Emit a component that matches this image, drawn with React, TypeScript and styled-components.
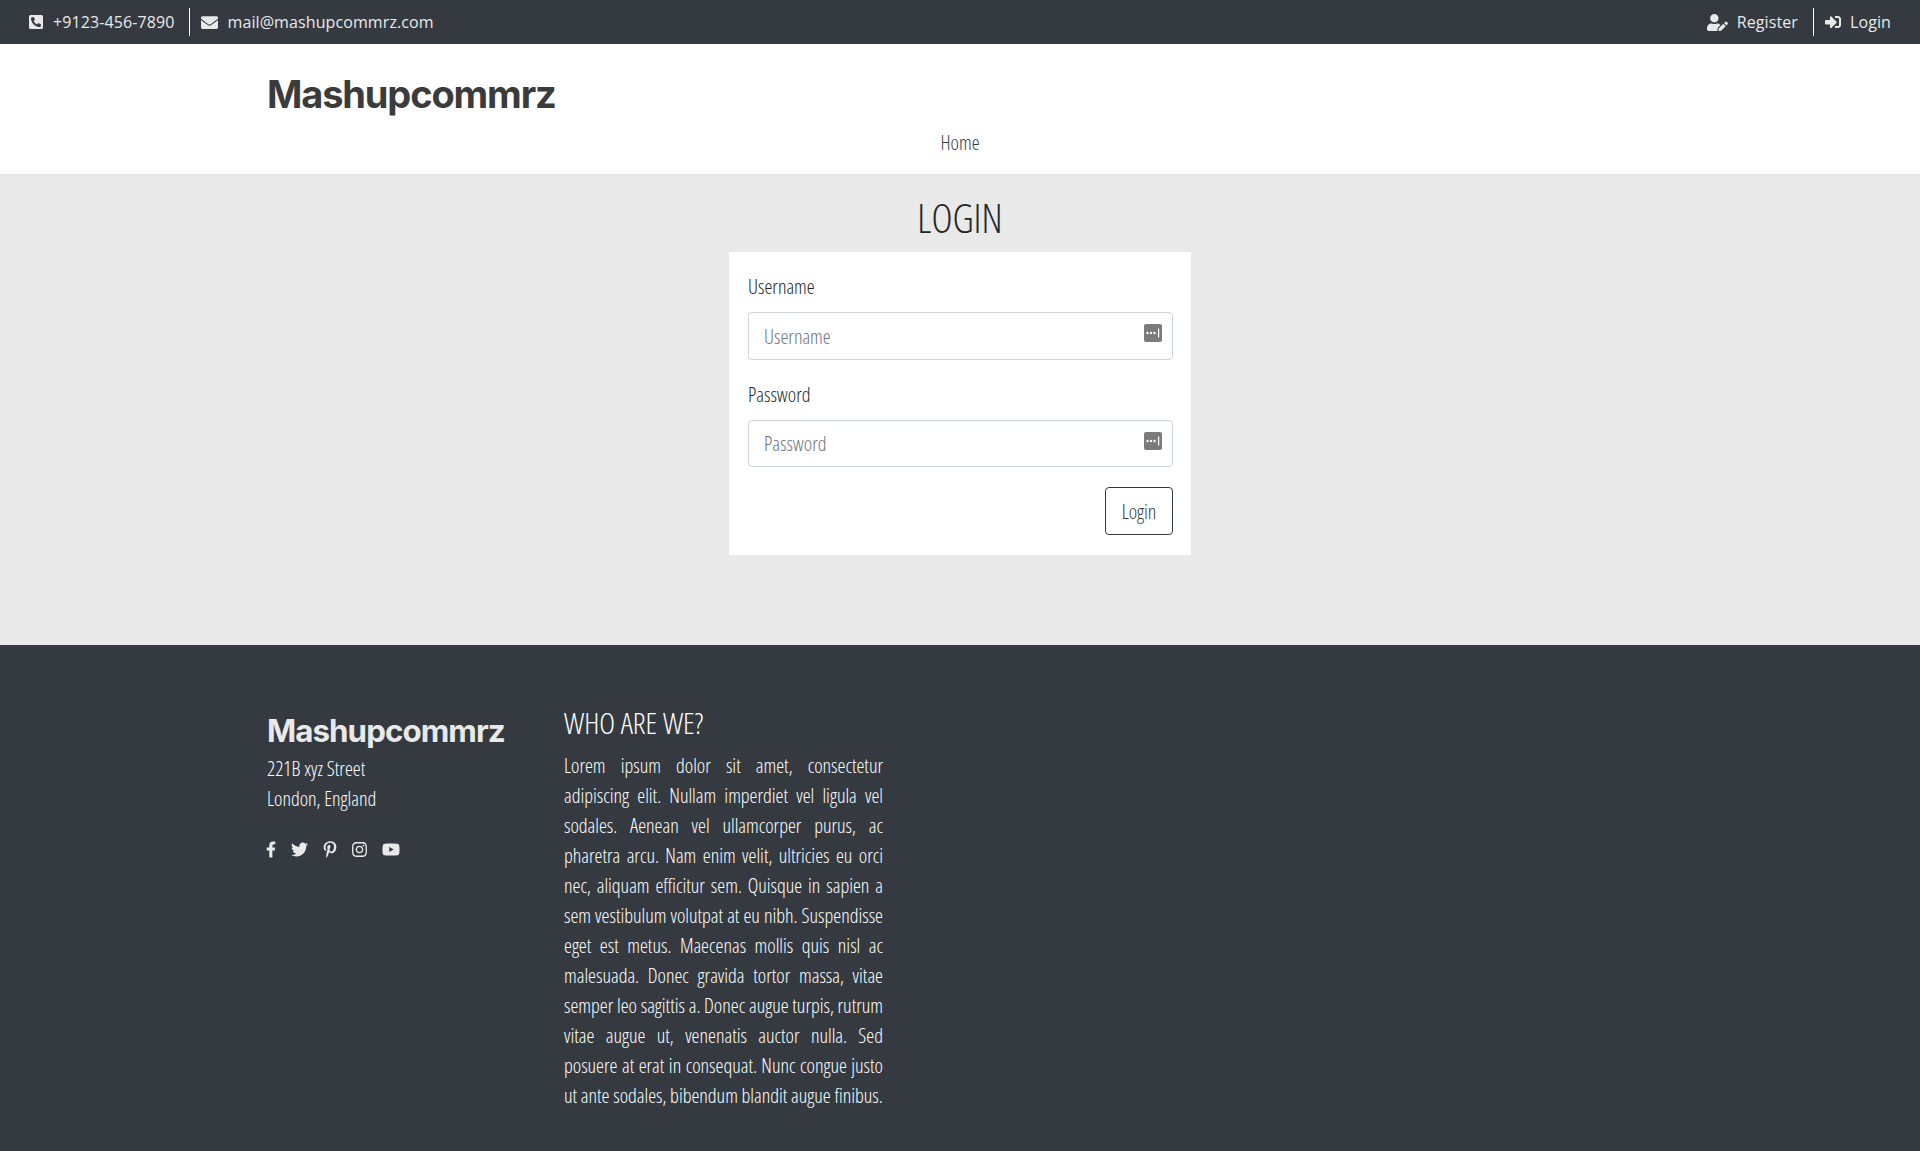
import React from 'react'
import styled, { createGlobalStyle } from 'styled-components'
import {
    FaEnvelope,
    FaFacebookF,
    FaInstagram,
    FaPhoneSquareAlt,
    FaPinterestP,
    FaSignInAlt,
    FaTwitter,
    FaUserEdit,
    FaYoutube,
} from 'react-icons/fa'

const condensed = `'Open Sans', 'Liberation Sans', sans-serif`

const GlobalStyle = createGlobalStyle`
    * {
        box-sizing: border-box;
    }
    html, body {
        margin: 0;
        padding: 0;
        background: #e9e9e9;
    }
    body {
        font-family: ${condensed};
        font-stretch: 75%;
        font-weight: 300;
    }
`

const TopBar = styled.div`
    height: 44px;
    background: #343a40;
    color: #e9e9e9;
    display: flex;
    justify-content: space-between;
    align-items: center;
    padding: 0 29px 0 28px;
    font-size: 16px;
    letter-spacing: 0.1px;
    font-stretch: 100%;
    font-weight: 400;
`

const TopGroup = styled.div`
    display: flex;
    align-items: center;
`

const TopItem = styled.span<{ $divided?: boolean }>`
    display: flex;
    align-items: center;
    height: 28px;
    gap: 9px;
    ${(p) =>
        p.$divided &&
        `border-left: 1px solid #fff;
         margin-left: 15px;
         padding-left: 11px;`}
`

const Header = styled.header`
    background: #fff;
    height: 130px;
    padding: 28px 267px 0;
    display: flex;
    flex-direction: column;
`

const Logo = styled.div<{ $size: number; $color: string }>`
    font-family: 'Inter', sans-serif;
    font-stretch: 100%;
    font-weight: 700;
    font-size: ${(p) => p.$size}px;
    letter-spacing: -0.03em;
    line-height: 1.2;
    color: ${(p) => p.$color};
`

const Nav = styled.nav`
    margin-top: 13px;
    text-align: center;
    font-size: 20px;
    line-height: 24px;
    color: #343a40;
`

const Main = styled.main`
    background: #e9e9e9;
    height: 471px;
    display: flex;
    flex-direction: column;
    align-items: center;
    padding-top: 19px;
`

const Title = styled.h1`
    margin: 0 0 9px;
    font-size: 40px;
    line-height: 50px;
    font-weight: 300;
    color: #212529;
`

const Card = styled.form`
    width: 462px;
    height: 303px;
    background: #fff;
    padding: 20px 18px 21px 19px;
    display: flex;
    flex-direction: column;
`

const Label = styled.label`
    font-size: 20px;
    line-height: 30px;
    font-weight: 300;
    color: #212529;
    margin-bottom: 10px;
`

const Field = styled.div`
    position: relative;
    margin-bottom: 20px;
`

const Input = styled.input<{ $height: number }>`
    display: block;
    width: 100%;
    height: ${(p) => p.$height}px;
    padding: 0 15px;
    font: inherit;
    font-size: 20px;
    color: #495057;
    border: 1px solid #ced4da;
    border-radius: 4px;
    background: #fff;
    &::placeholder {
        color: #6c757d;
        opacity: 1;
    }
`

const KeyIcon = styled.svg`
    position: absolute;
    top: 12px;
    right: 11px;
    width: 18px;
    height: 18px;
`

const Actions = styled.div`
    display: flex;
    justify-content: flex-end;
    margin-top: auto;
`

const Button = styled.button`
    width: 68px;
    height: 48px;
    font: inherit;
    font-size: 20px;
    color: #343a40;
    background: #fff;
    border: 1px solid #343a40;
    border-radius: 4px;
`

const Footer = styled.footer`
    background: #343a40;
    color: #fff;
    height: 506px;
    padding: 60px 267px 0;
    display: flex;
    font-size: 20px;
    font-weight: 340;
    line-height: 30px;
`

const FooterBrand = styled.div`
    width: 297px;
    padding-top: 8px;
`

const Address = styled.div`
    margin-top: 3px;
`

const Socials = styled.div`
    display: flex;
    align-items: center;
    gap: 15px;
    margin: 27px 0 0 -1px;
    color: #e9e9e9;
`

const Social = styled.span<{ $w: number }>`
    display: flex;
    width: ${(p) => p.$w}px;
    height: 17px;
    svg {
        width: 100%;
        height: 100%;
    }
`

const About = styled.div`
    width: 319px;
`

const AboutTitle = styled.h4`
    margin: 0 0 11px;
    padding-top: 1px;
    font-size: 30px;
    line-height: 34px;
    font-weight: 300;
`

const AboutText = styled.p`
    margin: 0;
    text-align: justify;
`

const PasswordGlyph = () => (
    <KeyIcon viewBox="0 0 18 18">
        <rect width="18" height="18" rx="2" fill="#7b7b7b" />
        <circle cx="3.5" cy="9" r="1.2" fill="#fff" />
        <circle cx="7" cy="9" r="1.2" fill="#fff" />
        <circle cx="10.5" cy="9" r="1.2" fill="#fff" />
        <rect x="14" y="4.5" width="1.2" height="9" fill="#fff" />
    </KeyIcon>
)

const lorem =
    'Lorem ipsum dolor sit amet, consectetur adipiscing elit. Nullam imperdiet vel ligula vel sodales. Aenean vel ullamcorper purus, ac pharetra arcu. Nam enim velit, ultricies eu orci nec, aliquam efficitur sem. Quisque in sapien a sem vestibulum volutpat at eu nibh. Suspendisse eget est metus. Maecenas mollis quis nisl ac malesuada. Donec gravida tortor massa, vitae semper leo sagittis a. Donec augue turpis, rutrum vitae augue ut, venenatis auctor nulla. Sed posuere at erat in consequat. Nunc congue justo ut ante sodales, bibendum blandit augue finibus.'

export default function App(): JSX.Element {
    return (
        <>
            <GlobalStyle />
            <TopBar>
                <TopGroup>
                    <TopItem>
                        <FaPhoneSquareAlt size={16} />
                        +9123-456-7890
                    </TopItem>
                    <TopItem $divided>
                        <FaEnvelope size={17} />
                        mail@mashupcommrz.com
                    </TopItem>
                </TopGroup>
                <TopGroup>
                    <TopItem>
                        <FaUserEdit size={21} />
                        Register
                    </TopItem>
                    <TopItem $divided>
                        <FaSignInAlt size={16} />
                        Login
                    </TopItem>
                </TopGroup>
            </TopBar>
            <Header>
                <Logo $size={38} $color="#3b3b3b">
                    Mashupcommrz
                </Logo>
                <Nav>Home</Nav>
            </Header>
            <Main>
                <Title>LOGIN</Title>
                <Card>
                    <Label>Username</Label>
                    <Field>
                        <Input $height={48} placeholder="Username" />
                        <PasswordGlyph />
                    </Field>
                    <Label>Password</Label>
                    <Field>
                        <Input $height={47} placeholder="Password" type="password" />
                        <PasswordGlyph />
                    </Field>
                    <Actions>
                        <Button type="button">Login</Button>
                    </Actions>
                </Card>
            </Main>
            <Footer>
                <FooterBrand>
                    <Logo $size={31.3} $color="#e9e9e9">
                        Mashupcommrz
                    </Logo>
                    <Address>
                        221B xyz Street
                        <br />
                        London, England
                    </Address>
                    <Socials>
                        <Social $w={10}>
                            <FaFacebookF />
                        </Social>
                        <Social $w={17}>
                            <FaTwitter />
                        </Social>
                        <Social $w={14}>
                            <FaPinterestP />
                        </Social>
                        <Social $w={15}>
                            <FaInstagram />
                        </Social>
                        <Social $w={18}>
                            <FaYoutube />
                        </Social>
                    </Socials>
                </FooterBrand>
                <About>
                    <AboutTitle>WHO ARE WE?</AboutTitle>
                    <AboutText>{lorem}</AboutText>
                </About>
            </Footer>
        </>
    )
}
